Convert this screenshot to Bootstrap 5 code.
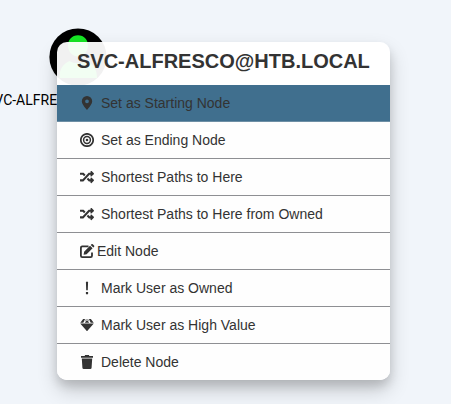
<!DOCTYPE html>
<html lang="en">
<head>
<meta charset="utf-8">
<title>Node menu</title>
<link href="https://cdn.jsdelivr.net/npm/bootstrap@5.3.0/dist/css/bootstrap.min.css" rel="stylesheet">
<style>
body{background:#f1f5fa;width:451px;height:404px;font-family:"Liberation Sans",Arial,sans-serif;color:#333}
.graph-node{left:49px;top:28px;width:58px}
.graph-node svg{display:block}
.node-label{left:-14px;top:92px;font:14px/17px Roboto,sans-serif;color:#000;white-space:nowrap}
.node-menu{left:57px;top:42px;width:333px;height:338px;border-radius:10px;background:rgba(255,255,255,.945);box-shadow:0 10px 20px rgba(0,0,0,.19),0 6px 10px rgba(0,0,0,.12)}
.menu-title{height:43px;padding:0 20px 6px;font-size:20px;line-height:22px;white-space:nowrap;background:transparent}
.menu-row{height:37px;padding:0 0 1px 23px;border-bottom:1px solid #8e8f93;font-size:14px;line-height:20px;background:#fefefe}
.menu-row:last-child{height:36px;padding-bottom:0;border-bottom:0}
.menu-row.current{background:#406f8e;border-bottom-color:#6e8fa5}
.menu-row svg{width:14px;height:14px;margin-right:7px;fill:#333;flex:none}
.menu-row.tight svg{width:15px;margin-right:2px}
</style>
<script src="https://cdn.jsdelivr.net/npm/bootstrap@5.3.0/dist/js/bootstrap.bundle.min.js"></script>
</head>
<body class="position-relative overflow-hidden m-0">
<div class="graph-node position-absolute"><svg width="58" height="58" viewBox="0 0 58 58"><circle cx="29" cy="29" r="28.6" fill="#000"/><path fill="#17e625" d="M29 7.300c6 0 10 4.500 10 10.200S35 28.500 29 28.500s-10-5.300-10-11S23 7.300 29 7.300zM10.500 50c0-9 3-13.500 10-17 5 3 12 3 17 0 7 3.500 10.500 8 10.500 17z"/></svg></div>
<div class="node-label position-absolute">SVC-ALFRE</div>
<div class="node-menu position-absolute overflow-hidden">
<div class="menu-title d-flex align-items-center fw-bold">SVC-ALFRESCO@HTB.LOCAL</div>
<div class="d-flex flex-column">
<div class="menu-row current d-flex align-items-center"><svg viewBox="0 0 14 14"><path fill-rule="evenodd" d="M7 0a5.200 5.200 0 0 1 5.200 5.200C12.200 8 9 11.500 7 14 5 11.500 1.800 8 1.800 5.200A5.200 5.200 0 0 1 7 0zm0 3.400a1.900 1.900 0 1 0 0 3.800 1.900 1.900 0 0 0 0-3.800z"/></svg>Set as Starting Node</div>
<div class="menu-row d-flex align-items-center"><svg viewBox="0 0 14 14"><g fill="none" stroke="#333"><circle cx="7" cy="7" r="6.200" stroke-width="1.700"/><circle cx="7" cy="7" r="3.400" stroke-width="1.500"/></g><circle cx="7" cy="7" r="1.300"/></svg>Set as Ending Node</div>
<div class="menu-row d-flex align-items-center"><svg viewBox="0 0 512 512"><path d="M504.971 359.029c9.373 9.373 9.373 24.569 0 33.941l-80 79.984c-15.010 15.010-40.971 4.490-40.971-16.971V416h-58.785a12.004 12.004 0 0 1-8.773-3.812l-70.556-75.596 53.333-57.143L352 336h32v-39.981c0-21.438 25.943-31.998 40.971-16.971l80 79.981zM12 176h84l52.781 56.551 53.333-57.143-70.556-75.596A11.999 11.999 0 0 0 122.785 96H12c-6.627 0-12 5.373-12 12v56c0 6.627 5.373 12 12 12zm372 0v39.984c0 21.460 25.961 31.980 40.971 16.971l80-79.984c9.373-9.373 9.373-24.569 0-33.941l-80-79.981C409.943 24.021 384 34.582 384 56.019V96h-58.785a12.004 12.004 0 0 0-8.773 3.812L96 336H12c-6.627 0-12 5.373-12 12v56c0 6.627 5.373 12 12 12h110.785c3.326 0 6.503-1.381 8.773-3.812L352 176h32z"/></svg>Shortest Paths to Here</div>
<div class="menu-row d-flex align-items-center"><svg viewBox="0 0 512 512"><path d="M504.971 359.029c9.373 9.373 9.373 24.569 0 33.941l-80 79.984c-15.010 15.010-40.971 4.490-40.971-16.971V416h-58.785a12.004 12.004 0 0 1-8.773-3.812l-70.556-75.596 53.333-57.143L352 336h32v-39.981c0-21.438 25.943-31.998 40.971-16.971l80 79.981zM12 176h84l52.781 56.551 53.333-57.143-70.556-75.596A11.999 11.999 0 0 0 122.785 96H12c-6.627 0-12 5.373-12 12v56c0 6.627 5.373 12 12 12zm372 0v39.984c0 21.460 25.961 31.980 40.971 16.971l80-79.984c9.373-9.373 9.373-24.569 0-33.941l-80-79.981C409.943 24.021 384 34.582 384 56.019V96h-58.785a12.004 12.004 0 0 0-8.773 3.812L96 336H12c-6.627 0-12 5.373-12 12v56c0 6.627 5.373 12 12 12h110.785c3.326 0 6.503-1.381 8.773-3.812L352 176h32z"/></svg>Shortest Paths to Here from Owned</div>
<div class="menu-row tight d-flex align-items-center"><svg viewBox="0 0 15 14"><path d="M8.500 2.400H2.200Q.9 2.400.9 3.700v8.100q0 1.300 1.300 1.300h8.500q1.300 0 1.300-1.300V8.500" fill="none" stroke="#333" stroke-width="1.800"/><path d="M10 1.700l2.600 2.600-6 6-3 .5.500-3zM10.700 1l.7-.7q.7-.6 1.400 0l1.200 1.200q.6.700 0 1.400l-.7.700z"/></svg>Edit Node</div>
<div class="menu-row d-flex align-items-center"><svg viewBox="0 0 14 14"><path d="M5.900.8h2.200l-.3 8.500H6.200zM5.900 11h2.200v2.200H5.900z"/></svg>Mark User as Owned</div>
<div class="menu-row d-flex align-items-center"><svg viewBox="0 0 14 14"><path d="M3.100 1h2L3.300 4.700H.3zM6 1h.7L4.600 4.200zM7.300 1H8l1.400 3.200zM8.900 1h2l2.800 3.700h-3zM7 2l2.200 2.700H4.800zM.2 5.400h13.600L7 13.200z"/></svg>Mark User as High Value</div>
<div class="menu-row d-flex align-items-center"><svg viewBox="0 0 14 14"><path d="M1 1h3.600l.6-1h3.600l.6 1H13v1.700H1zM1.800 3.600h10.400l-.6 9.200q-.1 1.200-1.300 1.200H3.700q-1.200 0-1.300-1.200z"/></svg>Delete Node</div>
</div>
</div>
</body>
</html>
